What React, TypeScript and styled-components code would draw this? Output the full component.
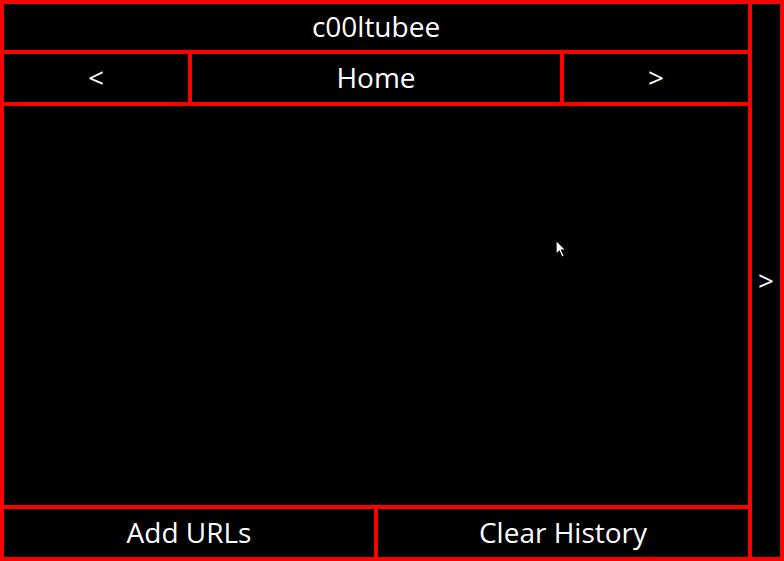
import styled, { createGlobalStyle } from "styled-components";

const GlobalStyle = createGlobalStyle`
  html, body {
    margin: 0;
    padding: 0;
    background: #000;
  }

  body {
    font-family: "Open Sans", "Noto Sans", sans-serif;
    color: #fff;
  }
`;

const red = "#ff0000";

const Frame = styled("div")`
  position: relative;
  box-sizing: border-box;
  width: 100vw;
  height: 100vh;
  border: 2px solid ${red};
  display: flex;
  background: #000;
`;

const MainColumn = styled("div")`
  flex: 1;
  display: flex;
  flex-direction: column;
  min-width: 0;
`;

const Cell = styled("div")<{ $grow?: number }>`
  box-sizing: border-box;
  border: 2px solid ${red};
  display: flex;
  align-items: center;
  justify-content: center;
  flex: ${(p) => p.$grow ?? 1};
  font-size: 28px;
  line-height: 1;
  white-space: nowrap;
  user-select: none;
`;

const TitleBar = styled(Cell)`
  flex: none;
  height: 50px;
  padding-bottom: 2px;
`;

const Row = styled("div")`
  display: flex;
  flex: none;
  height: 52px;
`;

const NavButton = styled(Cell)`
  font-size: 28px;
  padding-bottom: 2px;
`;

const Content = styled("div")`
  flex: 1;
  box-sizing: border-box;
  border: 2px solid ${red};
`;

const FooterButton = styled(Cell)`
  padding-bottom: 2px;
`;

const Sidebar = styled("div")`
  box-sizing: border-box;
  width: 32px;
  flex: none;
  border: 2px solid ${red};
  display: flex;
  align-items: center;
  justify-content: center;
  font-size: 28px;
  line-height: 1;
  padding-bottom: 2px;
`;

const Cursor = styled("svg")`
  position: absolute;
  left: 553px;
  top: 237px;
  pointer-events: none;
`;

export default function App() {
  return (
    <>
      <GlobalStyle />
      <Frame>
        <MainColumn>
          <TitleBar>c00ltubee</TitleBar>

          <Row>
            <NavButton $grow={1}>&lt;</NavButton>
            <NavButton $grow={2}>Home</NavButton>
            <NavButton $grow={1}>&gt;</NavButton>
          </Row>

          <Content />

          <Row>
            <FooterButton>Add URLs</FooterButton>
            <FooterButton>Clear History</FooterButton>
          </Row>
        </MainColumn>

        <Sidebar>&gt;</Sidebar>

        <Cursor width="13" height="20" viewBox="0 0 12 18">
          <path
            d="M1 1 L1 14 L4 11 L6.5 16.5 L8.5 15.5 L6 10 L10 10 Z"
            fill="#fff"
            stroke="#000"
            strokeWidth="1"
          />
        </Cursor>
      </Frame>
    </>
  );
}
